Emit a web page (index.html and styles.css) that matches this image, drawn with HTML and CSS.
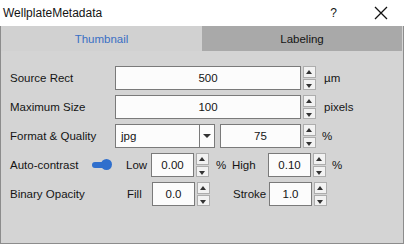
FILE: index.html
```html
<!DOCTYPE html>
<html lang="en">
<head>
  <meta charset="UTF-8">
  <meta name="viewport" content="width=device-width, initial-scale=1.0">
  <title>WellplateMetadata</title>
  <link rel="stylesheet" href="styles.css">
</head>
<body>
  <div class="window">
    <div class="titlebar">
      <span class="title">WellplateMetadata</span>
      <span class="help">?</span>
      <svg class="close" width="14" height="14" viewBox="0 0 14 14">
        <path d="M1 1 L13 13 M13 1 L1 13" stroke="#111" stroke-width="1.3" fill="none"/>
      </svg>
    </div>
    <div class="tabs">
      <div class="tab active">Thumbnail</div>
      <div class="tab">Labeling</div>
    </div>
    <div class="panel">
      <div class="row">
        <span class="label">Source Rect</span>
        <div class="box wide">500</div>
        <div class="spin"><span class="up"></span><span class="down"></span></div>
        <span class="unit">µm</span>
      </div>
      <div class="row">
        <span class="label">Maximum Size</span>
        <div class="box wide">100</div>
        <div class="spin"><span class="up"></span><span class="down"></span></div>
        <span class="unit">pixels</span>
      </div>
      <div class="row">
        <span class="label">Format &amp; Quality</span>
        <div class="combo">
          <span class="combo-text">jpg</span>
          <span class="combo-btn"></span>
        </div>
        <div class="box quality">75</div>
        <div class="spin"><span class="up"></span><span class="down"></span></div>
        <span class="unit pct">%</span>
      </div>
      <div class="row">
        <span class="label short">Auto-contrast</span>
        <span class="toggle"><span class="knob"></span></span>
        <span class="sub">Low</span>
        <div class="box small">0.00</div>
        <div class="spin"><span class="up"></span><span class="down"></span></div>
        <span class="mid">%</span>
        <span class="sub2">High</span>
        <div class="box small">0.10</div>
        <div class="spin"><span class="up"></span><span class="down"></span></div>
        <span class="unit pct">%</span>
      </div>
      <div class="row">
        <span class="label fill-label">Binary Opacity</span>
        <span class="sub">Fill</span>
        <div class="box small">0.0</div>
        <div class="spin"><span class="up"></span><span class="down"></span></div>
        <span class="sub3">Stroke</span>
        <div class="box small">1.0</div>
        <div class="spin"><span class="up"></span><span class="down"></span></div>
      </div>
    </div>
  </div>
</body>
</html>
```

FILE: styles.css
```css
body {
  margin: 0;
  padding: 0;
  font-family: "Liberation Sans", Arial, sans-serif;
  font-size: 11.5px;
  color: #141414;
  background: #d4d4d4;
}

.window {
  width: 404px;
  height: 244px;
  box-sizing: border-box;
  border: 1px solid #8c8c8c;
  border-top: none;
  display: flex;
  flex-direction: column;
  background: #d4d4d4;
}

.titlebar {
  height: 26px;
  background: #fff;
  display: flex;
  align-items: center;
  padding-left: 3px;
  margin: 0 -1px;
}

.title {
  font-size: 12px;
  flex: 1;
}

.help {
  font-size: 12px;
  margin-right: 37px;
}

.close {
  margin-right: 16px;
}

.tabs {
  display: flex;
  height: 25px;
  margin-right: 1px;
}

.tab {
  flex: 1;
  display: flex;
  align-items: center;
  justify-content: center;
  background: #a9a9a9;
  font-size: 11.5px;
}

.tab.active {
  background: #d1d1d1;
  color: #3a6fc4;
  flex: 0 0 201px;
}

.panel {
  padding: 15px 0 0 9px;
  display: flex;
  flex-direction: column;
  gap: 5px;
}

.row {
  display: flex;
  align-items: center;
  height: 24px;
}

.label {
  width: 105px;
}

.label.short {
  width: 82px;
}

.label.fill-label {
  width: 117px;
}

.box {
  height: 24px;
  box-sizing: border-box;
  border: 1px solid #7a7a7a;
  background: #fcfcfc;
  display: flex;
  align-items: center;
  justify-content: center;
}

.box.wide {
  width: 186px;
}

.box.quality {
  width: 81px;
  margin-left: 5px;
}

.box.small {
  width: 43px;
}

.spin {
  width: 13px;
  height: 24px;
  margin-left: 2px;
  display: flex;
  flex-direction: column;
  gap: 1px;
}

.spin span {
  flex: 1;
  background: #f2f2f2;
  border: 1px solid #adadad;
  position: relative;
}

.spin .up::after,
.spin .down::after {
  content: "";
  position: absolute;
  left: 2px;
  border-left: 3.5px solid transparent;
  border-right: 3.5px solid transparent;
}

.spin .up::after {
  top: 3px;
  border-bottom: 4px solid #333;
}

.spin .down::after {
  top: 4px;
  border-top: 4px solid #333;
}

.unit {
  margin-left: 8px;
}

.unit.pct {
  margin-left: 6px;
}

.combo {
  width: 100px;
  height: 24px;
  box-sizing: border-box;
  border: 1px solid #7a7a7a;
  background: #fcfcfc;
  display: flex;
  align-items: center;
}

.combo-text {
  flex: 1;
  padding-left: 5px;
}

.combo-btn {
  width: 14px;
  height: 100%;
  border-left: 1px solid #7a7a7a;
  display: flex;
  align-items: center;
  justify-content: center;
}

.combo-btn::after {
  content: "";
  border-left: 4px solid transparent;
  border-right: 4px solid transparent;
  border-top: 4px solid #333;
}

.toggle {
  width: 20px;
  height: 10px;
  position: relative;
  margin-right: 14px;
}

.toggle::before {
  content: "";
  position: absolute;
  left: 0;
  top: 2px;
  width: 14px;
  height: 6px;
  border-radius: 3px;
  background: #2f6fcd;
}

.knob {
  position: absolute;
  left: 9px;
  top: -1px;
  width: 11px;
  height: 11px;
  border-radius: 50%;
  background: #2f6fcd;
}

.sub {
  width: 25px;
}

.mid {
  margin-left: 7px;
  width: 16px;
}

.sub2 {
  width: 36px;
}

.sub3 {
  margin-left: 23px;
  width: 36px;
}
```
